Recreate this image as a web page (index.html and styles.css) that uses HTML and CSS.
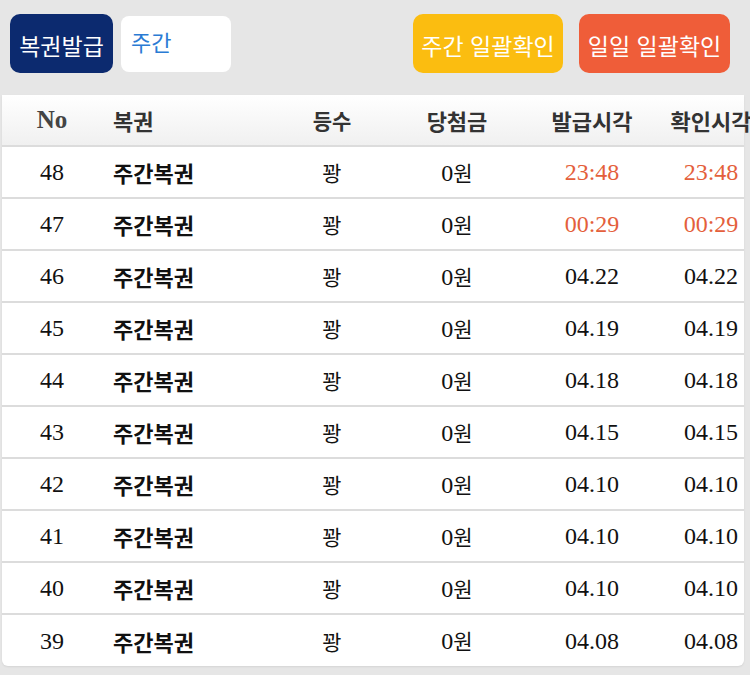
FILE: index.html
```html
<!DOCTYPE html>
<html lang="ko">
<head>
<meta charset="utf-8">
<link rel="stylesheet" href="styles.css">
</head>
<body>
<div class="top">
  <div class="left">
    <button class="btn navy">복권발급</button>
    <div class="select">주간</div>
  </div>
  <div class="right">
    <button class="btn yellow">주간 일괄확인</button>
    <button class="btn orange">일일 일괄확인</button>
  </div>
</div>
<div class="table">
  <div class="row head">
    <div class="c c1 no">No</div>
    <div class="c c2">복권</div>
    <div class="c c3">등수</div>
    <div class="c c4">당첨금</div>
    <div class="c c5">발급시각</div>
    <div class="c c6">확인시각</div>
  </div>
  <div class="row"><div class="c c1">48</div><div class="c c2 name">주간복권</div><div class="c c3">꽝</div><div class="c c4">0<span class="ko">원</span></div><div class="c c5 hot">23:48</div><div class="c c6 hot">23:48</div></div>
  <div class="row"><div class="c c1">47</div><div class="c c2 name">주간복권</div><div class="c c3">꽝</div><div class="c c4">0<span class="ko">원</span></div><div class="c c5 hot">00:29</div><div class="c c6 hot">00:29</div></div>
  <div class="row"><div class="c c1">46</div><div class="c c2 name">주간복권</div><div class="c c3">꽝</div><div class="c c4">0<span class="ko">원</span></div><div class="c c5">04.22</div><div class="c c6">04.22</div></div>
  <div class="row"><div class="c c1">45</div><div class="c c2 name">주간복권</div><div class="c c3">꽝</div><div class="c c4">0<span class="ko">원</span></div><div class="c c5">04.19</div><div class="c c6">04.19</div></div>
  <div class="row"><div class="c c1">44</div><div class="c c2 name">주간복권</div><div class="c c3">꽝</div><div class="c c4">0<span class="ko">원</span></div><div class="c c5">04.18</div><div class="c c6">04.18</div></div>
  <div class="row"><div class="c c1">43</div><div class="c c2 name">주간복권</div><div class="c c3">꽝</div><div class="c c4">0<span class="ko">원</span></div><div class="c c5">04.15</div><div class="c c6">04.15</div></div>
  <div class="row"><div class="c c1">42</div><div class="c c2 name">주간복권</div><div class="c c3">꽝</div><div class="c c4">0<span class="ko">원</span></div><div class="c c5">04.10</div><div class="c c6">04.10</div></div>
  <div class="row"><div class="c c1">41</div><div class="c c2 name">주간복권</div><div class="c c3">꽝</div><div class="c c4">0<span class="ko">원</span></div><div class="c c5">04.10</div><div class="c c6">04.10</div></div>
  <div class="row"><div class="c c1">40</div><div class="c c2 name">주간복권</div><div class="c c3">꽝</div><div class="c c4">0<span class="ko">원</span></div><div class="c c5">04.10</div><div class="c c6">04.10</div></div>
  <div class="row last"><div class="c c1">39</div><div class="c c2 name">주간복권</div><div class="c c3">꽝</div><div class="c c4">0<span class="ko">원</span></div><div class="c c5">04.08</div><div class="c c6">04.08</div></div>
</div>
</body>
</html>
```
FILE: styles.css
```css
html, body {
  margin: 0;
  padding: 0;
  overflow: hidden;
  background: #e6e6e6;
}
body {
  width: 750px;
  height: 675px;
  font-family: "Liberation Serif", "Noto Sans CJK KR", serif;
}
.top {
  display: flex;
  justify-content: space-between;
  align-items: center;
  padding: 14px 20px 0 10px;
  height: 59px;
}
.left, .right {
  display: flex;
  align-items: center;
  gap: 8px;
}
.right { gap: 16px; }
.btn {
  border: none;
  height: 59px;
  border-radius: 10px;
  color: #fff;
  font-family: "Noto Sans CJK KR", "Noto Sans", sans-serif;
  font-size: 23px;
  font-weight: 400;
  padding: 2px 0 0;
  margin: 0;
  white-space: nowrap;
}
.navy { background: #0c2a6f; width: 103px; }
.yellow { background: #fbbd10; width: 150px; }
.orange { background: #ef5d39; width: 151px; }
.select {
  width: 110px;
  height: 56px;
  box-sizing: border-box;
  background: #fff;
  border-radius: 8px;
  color: #2a7bd4;
  font-family: "Noto Sans CJK KR", "Noto Sans", sans-serif;
  font-size: 22px;
  padding: 10px 10px;
  line-height: 30px;
}
.table {
  margin: 22px 0 0 2px;
  width: 742px;
  background: #fff;
  border-radius: 0 0 6px 6px;
  box-shadow: 0 1px 2px rgba(0,0,0,0.08);
}
.row {
  display: grid;
  grid-template-columns: 100px 180px 100px 150px 120px 118px;
  height: 50px;
  align-items: center;
  border-bottom: 2px solid #dcdcdc;
  font-size: 24px;
  line-height: 30px;
  color: #111;
}
.row.last { border-bottom: none; height: 51px; }
.head {
  background: linear-gradient(#ffffff, #f0f0f0);
  color: #333;
  font-family: "Noto Sans CJK KR", sans-serif;
  font-size: 22px;
  font-weight: 700;
}
.c {
  text-align: center;
  white-space: nowrap;
}
.c2 { text-align: left; padding-left: 11px; }
.head .no {
  font-family: "Liberation Serif", serif;
  font-size: 25px;
  color: #444;
}
.name {
  font-family: "Noto Sans CJK KR", sans-serif;
  font-weight: 700;
  font-size: 22px;
  color: #111;
}
.c3 {
  font-family: "Noto Sans CJK KR", sans-serif;
  font-size: 21px;
}
.ko {
  font-family: "Noto Sans CJK KR", sans-serif;
  font-size: 21px;
}
.hot { color: #e45f3c; }
```
